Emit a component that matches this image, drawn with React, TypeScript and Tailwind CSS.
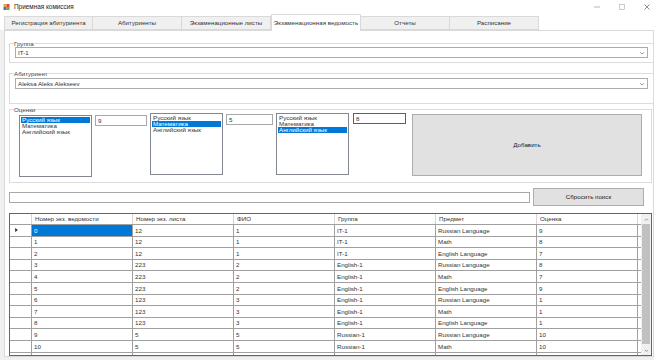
import React from 'react';

const tabs = [
  'Регистрация абитуриента',
  'Абитуриенты',
  'Экзаменационные листы',
  'Экзаменационная ведомость',
  'Отчеты',
  'Расписание'
];

const subjects = ['Русский язык', 'Математика', 'Английский язык'];

const columns = ['Номер экз. ведомости', 'Номер экз. листа', 'ФИО', 'Группа', 'Предмет', 'Оценка'];

const rows: string[][] = [
  ['0', '12', '1', 'IT-1', 'Russian Language', '9'],
  ['1', '12', '1', 'IT-1', 'Math', '8'],
  ['2', '12', '1', 'IT-1', 'English Language', '7'],
  ['3', '223', '2', 'English-1', 'Russian Language', '8'],
  ['4', '223', '2', 'English-1', 'Math', '7'],
  ['5', '223', '2', 'English-1', 'English Language', '9'],
  ['6', '123', '3', 'English-1', 'Russian Language', '1'],
  ['7', '123', '3', 'English-1', 'Math', '1'],
  ['8', '123', '3', 'English-1', 'English Language', '1'],
  ['9', '5', '5', 'Russian-1', 'Russian Language', '10'],
  ['10', '5', '5', 'Russian-1', 'Math', '10'],
  ['11', '5', '5', 'Russian-1', 'English Language', '10']
];

function GroupBox({ title, className, children }: { title: string; className: string; children: React.ReactNode }) {
  return (
    <fieldset className={`ml-[4px] w-[643px] border border-[#dcdcdc] px-[5px] ${className}`}>
      <legend className="ml-[-1px] px-0 text-[6.2px] leading-[7px] text-[#444]">{title}</legend>
      {children}
    </fieldset>
  );
}

function Combo({ value }: { value: string }) {
  return (
    <div className="flex h-[11px] w-[633px] items-center justify-between border border-[#acacac] bg-white pl-[2px] pr-[2px] text-[6.2px] text-[#333]">
      <span>{value}</span>
      <svg viewBox="0 0 8 8" className="h-[6px] w-[6px]" fill="none" stroke="#606060" strokeWidth="0.9">
        <path d="M1.5 3 4 5.5 6.5 3" />
      </svg>
    </div>
  );
}

function ListBox({ selected, className }: { selected: number; className: string }) {
  return (
    <div className={`h-[62px] w-[73px] border border-[#828790] bg-white p-[1px] text-[6.2px] leading-[6px] ${className}`}>
      {subjects.map((s, i) => (
        <div key={s} className={`h-[6px] pl-[1px] ${i === selected ? 'bg-[#0078d7] text-white' : 'text-[#333]'}`}>
          {s}
        </div>
      ))}
    </div>
  );
}

function TextBox({ value, focused, className }: { value: string; focused?: boolean; className: string }) {
  return (
    <div
      className={`flex h-[11px] items-center border bg-white pl-[2px] text-[6.2px] text-[#333] ${
        focused ? 'border-[#0078d7]' : 'border-[#a8a8a8]'
      } ${className}`}
    >
      {value}
    </div>
  );
}

export default function App() {
  return (
    <div
      className="h-[360px] w-[654px] overflow-hidden bg-[#f0f0f0] text-[#333]"
      style={{ fontFamily: '"Liberation Sans", Arial, sans-serif' }}
    >
      {/* title bar */}
      <div className="flex h-[14px] items-center bg-white">
        <svg viewBox="0 0 8 8" className="ml-[3px] h-[6px] w-[7px]">
          <rect x="0" y="0" width="4" height="4" fill="#e8a33c" />
          <rect x="4" y="0" width="4" height="4" fill="#d94b3a" />
          <rect x="0" y="4" width="4" height="4" fill="#3f78c8" />
          <rect x="4" y="4" width="4" height="4" fill="#6aa84f" />
        </svg>
        <span className="ml-[4px] text-[6.4px] text-[#222]">Приемная комиссия</span>
        <div className="ml-auto flex items-center gap-[19px] pr-[4px]">
          <svg viewBox="0 0 6 6" className="h-[6px] w-[6px]" stroke="#888" strokeWidth="0.6">
            <path d="M0 3h6" />
          </svg>
          <svg viewBox="0 0 6 6" className="h-[6px] w-[6px]" fill="none" stroke="#aaa" strokeWidth="0.6">
            <rect x="0.5" y="0.5" width="5" height="5" />
          </svg>
          <svg viewBox="0 0 6 6" className="h-[6px] w-[6px]" stroke="#444" strokeWidth="0.6">
            <path d="M0.5 0.5 5.5 5.5M5.5 0.5 0.5 5.5" />
          </svg>
        </div>
      </div>

      {/* tab strip */}
      <div className="flex h-[16px] items-end bg-white pl-[4px]">
        {tabs.map((t, i) =>
          i === 3 ? (
            <div
              key={t}
              className="relative z-10 mb-[-1px] flex h-[17px] w-[90px] items-center justify-center border border-b-0 border-[#d9d9d9] bg-white text-[6.2px]"
            >
              {t}
            </div>
          ) : (
            <div
              key={t}
              className="flex h-[14px] w-[89px] items-center justify-center border border-[#d9d9d9] bg-[#f0f0f0] text-[6.2px] [&:not(:first-child)]:border-l-0"
            >
              {t}
            </div>
          )
        )}
      </div>

      {/* tab page */}
      <div className="ml-[4px] h-[327px] w-[650px] border border-[#d9d9d9] bg-white pt-[9px]">
        <GroupBox title="Группа" className="h-[23px]">
          <Combo value="IT-1" />
        </GroupBox>

        <GroupBox title="Абитуриент" className="mt-[7px] h-[34px]">
          <div className="mt-[1px]">
            <Combo value="Aleksa Aleks Alekseev" />
          </div>
        </GroupBox>

        <GroupBox title="Оценки" className="mt-[2px] h-[77px]">
          <div className="flex items-start pl-[4px]">
            <ListBox selected={0} className="mt-[2px]" />
            <TextBox value="9" className="ml-[3px] mt-[2px] w-[52px]" />
            <ListBox selected={1} className="ml-[3px]" />
            <TextBox value="5" className="ml-[3px] mt-[1px] w-[47px]" />
            <ListBox selected={2} className="ml-[3px]" />
            <TextBox value="8" focused className="ml-[4px] w-[53px]" />
            <button
              type="button"
              className="ml-[6px] mt-[1px] flex h-[62px] w-[230px] items-center justify-center border border-[#adadad] bg-[#e1e1e1] text-[6.2px] text-[#222]"
            >
              Добавить
            </button>
          </div>
        </GroupBox>

        {/* search row */}
        <div className="mt-[5px] flex items-center pl-[4px]">
          <div className="h-[11px] w-[521px] border border-[#a8a8a8] bg-white" />
          <button
            type="button"
            className="ml-[3px] flex h-[18px] w-[111px] items-center justify-center border border-[#adadad] bg-[#e1e1e1] text-[6.2px] text-[#222]"
          >
            Сбросить поиск
          </button>
        </div>

        {/* data grid */}
        <div className="ml-[4px] mt-[7px] flex h-[143px] w-[643px] overflow-hidden border border-[#646464] bg-white text-[6.2px]">
          <div className="flex-1 overflow-hidden">
            <div className="flex h-[11px] border-b border-[#a0a0a0]">
              <div className="w-[22px] shrink-0 border-r border-[#d6d6d6]" />
              {columns.map((c) => (
                <div key={c} className="flex w-[101px] shrink-0 items-center border-r border-[#d6d6d6] pl-[3px]">
                  {c}
                </div>
              ))}
            </div>
            {rows.map((r, ri) => (
              <div key={ri} className="flex h-[11.6px] border-b border-[#a0a0a0]">
                <div className="flex w-[22px] shrink-0 items-center border-r border-[#a0a0a0] pl-[5px]">
                  {ri === 0 && (
                    <svg viewBox="0 0 4 6" className="h-[4px] w-[3px]" fill="#222">
                      <path d="M0 0 4 3 0 6Z" />
                    </svg>
                  )}
                </div>
                {r.map((v, ci) => (
                  <div
                    key={ci}
                    className={`flex w-[101px] shrink-0 items-center border-r border-[#a0a0a0] pl-[2px] ${
                      ri === 0 && ci === 0 ? 'bg-[#0078d7] text-white' : ''
                    }`}
                  >
                    {v}
                  </div>
                ))}
              </div>
            ))}
          </div>
          {/* scrollbar */}
          <div className="flex w-[10px] shrink-0 flex-col bg-[#f0f0f0]">
            <div className="flex h-[10px] items-center justify-center">
              <svg viewBox="0 0 8 8" className="h-[5px] w-[5px]" fill="none" stroke="#606060" strokeWidth="1">
                <path d="M1.5 5.5 4 3 6.5 5.5" />
              </svg>
            </div>
            <div className="mx-[1px] h-[120px] bg-[#c1c1c1]" />
            <div className="flex-1" />
            <div className="flex h-[10px] items-center justify-center">
              <svg viewBox="0 0 8 8" className="h-[5px] w-[5px]" fill="none" stroke="#606060" strokeWidth="1">
                <path d="M1.5 3 4 5.5 6.5 3" />
              </svg>
            </div>
          </div>
        </div>
      </div>
    </div>
  );
}
